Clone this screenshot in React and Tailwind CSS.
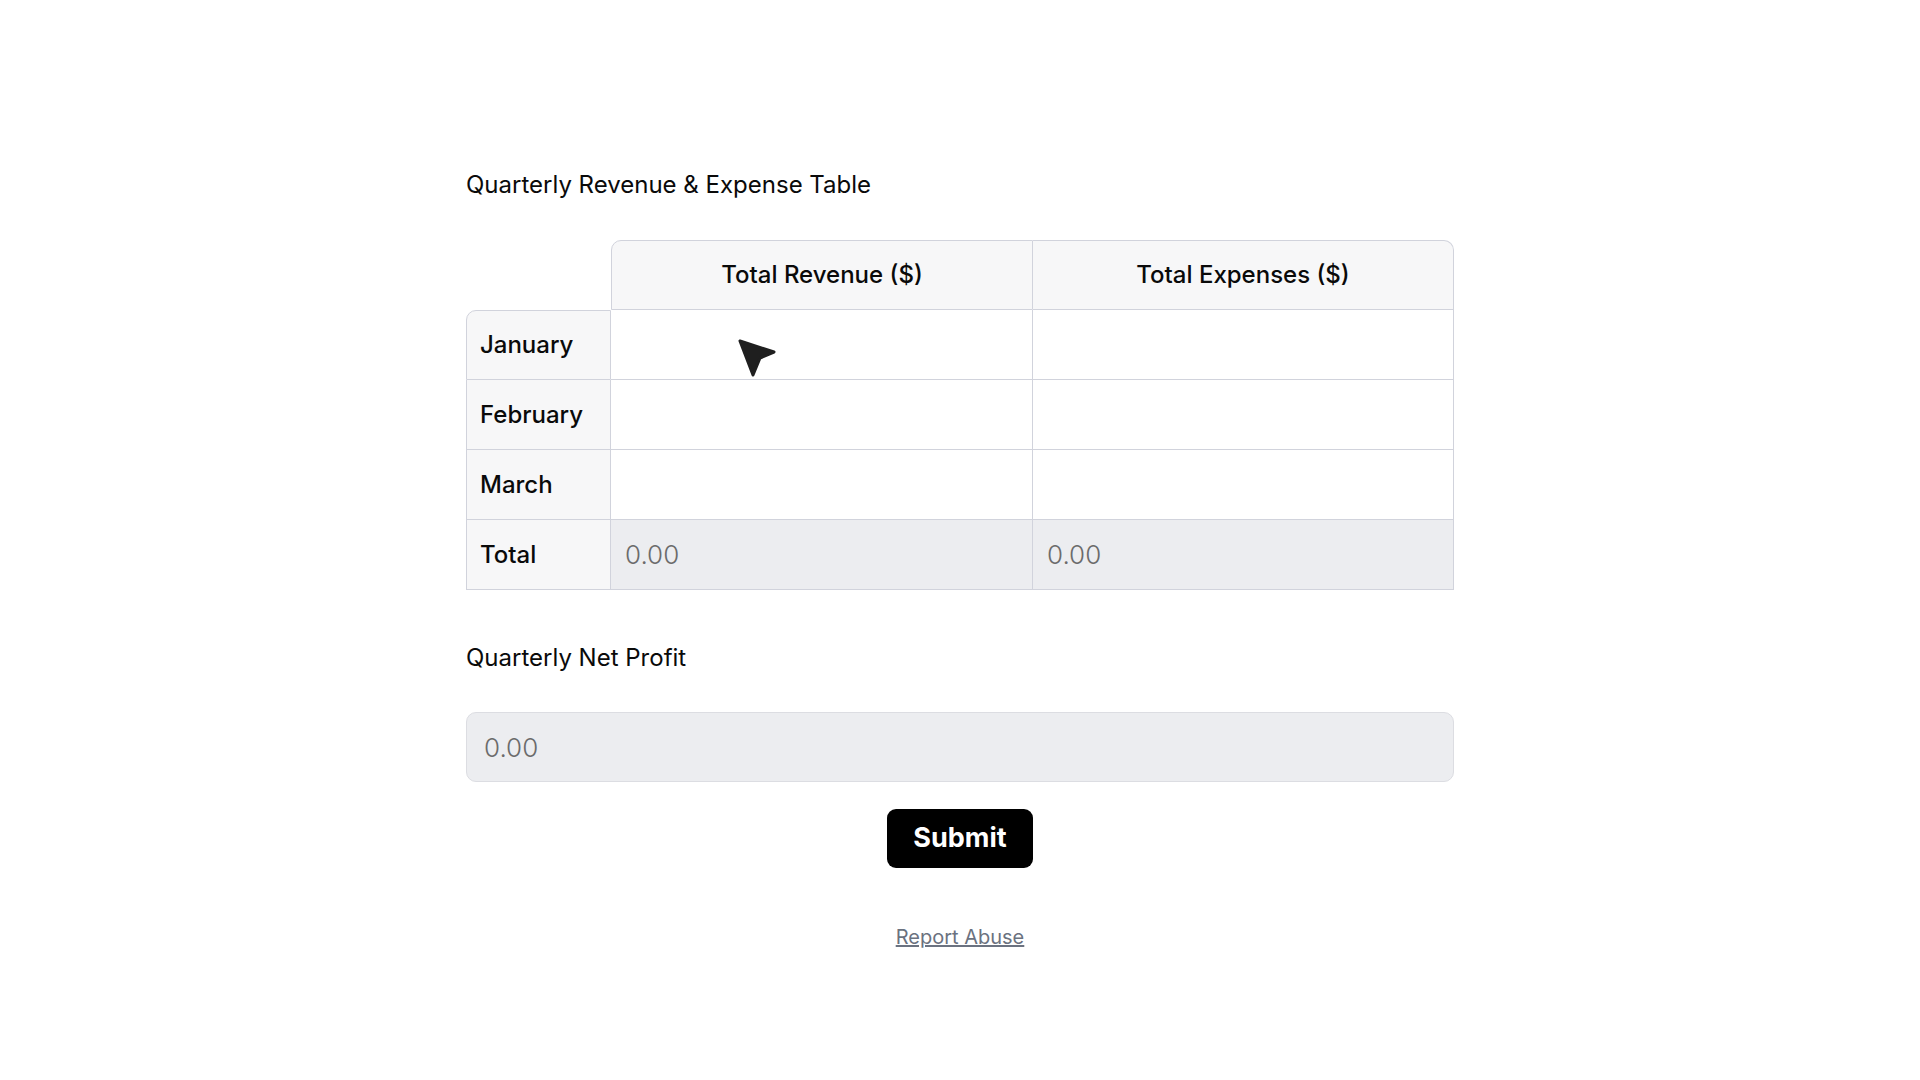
import React, { useState } from "react";

const months = ["January", "February", "March"];

const App = () => {
  // values per month: [revenue, expenses]
  const [rows, setRows] = useState(months.map(() => ["", ""]));

  const handleChange = (i, j, value) => {
    setRows((prev) =>
      prev.map((r, ri) => (ri === i ? r.map((c, ci) => (ci === j ? value : c)) : r))
    );
  };

  const sum = (j) =>
    rows.reduce((acc, r) => acc + (parseFloat(r[j]) || 0), 0);

  const revenue = sum(0);
  const expenses = sum(1);

  return (
    <div className="min-h-screen bg-white font-[Inter,sans-serif] text-[#0a0a0a]">
      <div className="w-[988px] mx-auto pt-[167px] pb-20">
        <h2 className="text-[24px] leading-[36px] font-normal mb-[37px]">
          Quarterly Revenue &amp; Expense Table
        </h2>

        {/* Table */}
        <div className="relative">
          <table className="w-[988px] table-fixed border-separate border-spacing-0">
            <colgroup>
              <col className="w-[145px]" />
              <col className="w-[422px]" />
              <col className="w-[421px]" />
            </colgroup>
            <thead>
              <tr className="h-[70px]">
                <th></th>
                <th className="border border-[#d1d3dc] rounded-tl-[10px] bg-[#f7f7f8] text-[24px] font-medium">
                  Total Revenue ($)
                </th>
                <th className="border-t border-r border-b border-[#d1d3dc] rounded-tr-[10px] bg-[#f7f7f8] text-[24px] font-medium">
                  Total Expenses ($)
                </th>
              </tr>
            </thead>
            <tbody>
              {months.map((m, i) => (
                <tr key={m} className="h-[70px]">
                  <th
                    className={
                      i === 0
                        ? "border border-[#d1d3dc] rounded-tl-[10px] bg-[#f7f7f8] text-left pl-[13px] text-[24px] font-medium"
                        : "border-l border-r border-b border-[#d1d3dc] bg-[#f7f7f8] text-left pl-[13px] text-[24px] font-medium"
                    }
                  >
                    {m}
                  </th>
                  {[0, 1].map((j) => (
                    <td key={j} className="border-r border-b border-[#d1d3dc] p-0 bg-white">
                      <input
                        type="text"
                        value={rows[i][j]}
                        onChange={(e) => handleChange(i, j, e.target.value)}
                        className="w-full h-[69px] px-[14px] bg-transparent outline-none text-[26px]"
                      />
                    </td>
                  ))}
                </tr>
              ))}
              <tr className="h-[70px]">
                <th className="border-l border-r border-b border-[#d1d3dc] bg-[#f7f7f8] text-left pl-[13px] text-[24px] font-medium">
                  Total
                </th>
                <td className="border-r border-b border-[#d1d3dc] p-0 bg-[#ecedf0]">
                  <input
                    readOnly
                    value={revenue.toFixed(2)}
                    className="w-full h-[69px] px-[14px] bg-transparent outline-none text-[26px] font-light text-[#6b6b6b]"
                  />
                </td>
                <td className="border-r border-b border-[#d1d3dc] p-0 bg-[#ecedf0]">
                  <input
                    readOnly
                    value={expenses.toFixed(2)}
                    className="w-full h-[69px] px-[14px] bg-transparent outline-none text-[26px] font-light text-[#6b6b6b]"
                  />
                </td>
              </tr>
            </tbody>
          </table>

          {/* mouse pointer from the screenshot */}
          <svg
            className="absolute left-[271px] top-[98px] w-[40px] h-[40px] pointer-events-none"
            viewBox="0 0 40 40"
          >
            <path
              d="M3 3 L37 14 L23 20 L16 37 Z"
              fill="#1f1f1f"
              stroke="#1f1f1f"
              strokeWidth="3"
              strokeLinejoin="round"
            />
          </svg>
        </div>

        {/* Net profit */}
        <h2 className="text-[24px] leading-[36px] font-normal mt-[50px] mb-[36px]">
          Quarterly Net Profit
        </h2>
        <input
          readOnly
          value={(revenue - expenses).toFixed(2)}
          className="w-full h-[70px] px-[17px] rounded-[10px] border border-[#dcdde2] bg-[#ecedf0] outline-none text-[26px] font-light text-[#6b6b6b]"
        />

        <div className="flex justify-center mt-[27px]">
          <button className="h-[59px] px-[26px] rounded-[9px] bg-black text-white text-[27px] font-bold">
            Submit
          </button>
        </div>

        <div className="flex justify-center mt-[54px]">
          <a href="#" className="text-[20px] leading-[30px] text-[#6b7280] underline">
            Report Abuse
          </a>
        </div>
      </div>
    </div>
  );
};

export default App;
